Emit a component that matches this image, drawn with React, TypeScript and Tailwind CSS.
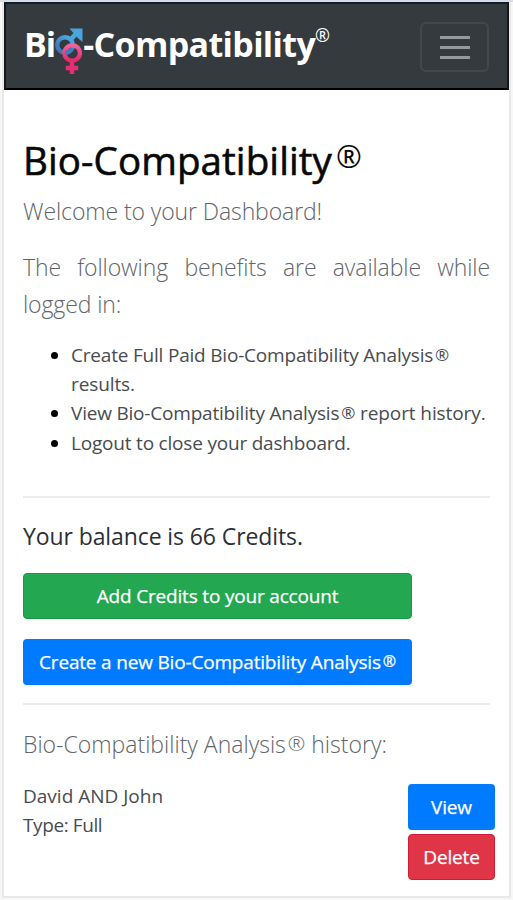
import { clsx } from "clsx";

const BENEFITS = [
  { before: "Create Full Paid Bio-Compatibility Analysis", after: " results." },
  { before: "View Bio-Compatibility Analysis", after: " report history." },
  { before: "Logout to close your dashboard." },
];

function Reg({ className }: { className?: string }) {
  return <span className={clsx("leading-none", className)}>®</span>;
}

function Logo() {
  return (
    <div className="-mt-[1px] flex items-start text-white font-bold text-[34px] leading-[46px]">
      <span className="tracking-[-1px]">Bi</span>
      <svg viewBox="0 0 28 48" className="w-7 h-12 mt-[6px] shrink-0" fill="none">
        <defs>
          <linearGradient id="male" x1="0" y1="1" x2="1" y2="0">
            <stop offset="0" stopColor="#3c6fb5" />
            <stop offset="1" stopColor="#4eb0e6" />
          </linearGradient>
          <linearGradient id="female" x1="0" y1="0" x2="0" y2="1">
            <stop offset="0" stopColor="#f0639b" />
            <stop offset="1" stopColor="#e8256b" />
          </linearGradient>
        </defs>
        <circle cx="10" cy="18" r="7.8" stroke="url(#male)" strokeWidth="4.4" />
        <path d="M15.5 12.5L22 6" stroke="#4aa5de" strokeWidth="4.6" />
        <path d="M14.5 1.5H27.5V15L22.8 11L18 5.5Z" fill="#4aa5de" />
        <circle cx="17.2" cy="26" r="7.8" stroke="url(#female)" strokeWidth="4.4" />
        <path d="M17 34V47M10.8 41H23.2" stroke="#e82d70" strokeWidth="4.4" />
        <path d="M10 25.8A7.8 7.8 0 0 0 17.2 21" stroke="#3f7cc0" strokeWidth="4.4" />
      </svg>
      <span className="tracking-[-0.65px]">-Compatibility</span>
      <Reg className="mt-[5px] text-[18px] font-medium" />
    </div>
  );
}

function Navbar() {
  return (
    <header className="h-[88px] flex items-start justify-between bg-[#343a3e] border-2 border-t-[#0b2033] border-x-[#15171b] border-b-black pl-[18px] pr-[18px] pt-[18px]">
      <Logo />
      <button className="w-[69px] h-[50px] flex flex-col items-center justify-center gap-[7px] rounded-md border-2 border-[#42484c]">
        <span className="w-[30px] h-[3px] bg-[#929a9c]" />
        <span className="w-[30px] h-[3px] bg-[#929a9c]" />
        <span className="w-[30px] h-[3px] bg-[#929a9c]" />
      </button>
    </header>
  );
}

export default function App() {
  return (
    <div className="h-[900px] overflow-hidden bg-[#f7f7f8] border-t-2 border-[#d9dde1] px-0.5 font-['Open_Sans','Noto_Sans',sans-serif]">
      <div className="h-[896px] bg-white border-b-2 border-x-2 border-[#e9e9ea]">
        <Navbar />
        <main className="pl-[19px] pr-[14px] pt-[47px]">
          <h1 className="h-[51px] flex text-[38.5px] leading-[46px] text-[#080808] [-webkit-text-stroke:0.6px_#080808]">
            <span className="tracking-[0.1px]">Bio-Compatibility</span>
            <Reg className="text-[31px] ml-1 mt-1 [-webkit-text-stroke:0]" />
          </h1>
          <p className="h-[61px] text-[23px] leading-[46px] font-light text-[#60656b] tracking-[-0.1px]">
            Welcome to your Dashboard!
          </p>
          <p className="h-[73px] pr-[5px] text-[23px] leading-[36.5px] font-light text-[#60656b] tracking-[-0.1px] text-justify">
            The following benefits are available while logged in:
          </p>
          <ul className="mt-[19px] pl-[48px] list-disc text-[19px] leading-[29.2px] text-[#484c50] marker:text-black tracking-[-0.2px]">
            {BENEFITS.map((b) => (
              <li key={b.before}>
                {b.before}
                {b.after && <Reg className="text-[17px] align-[1px] ml-0.5" />}
                {b.after && <span className="tracking-[-0.1px]">{b.after}</span>}
              </li>
            ))}
          </ul>
          <hr className="mt-[38px] mr-[5px] border-t-2 border-[#ebebeb]" />
          <p className="mt-[20px] text-[23px] leading-[36px] text-[#2c3035] tracking-[-0.1px]">
            Your balance is 66 Credits.
          </p>
          <div className="mt-[19px] w-[389px] flex flex-col gap-5 text-[19px] text-white tracking-[-0.18px] [-webkit-text-stroke:0.25px_white]">
            <button className="h-[46px] rounded bg-[#23a750] border border-[#189a43]">
              Add Credits to your account
            </button>
            <button className="h-[46px] rounded bg-[#007bff]">
              Create a new Bio-Compatibility Analysis
              <Reg className="text-[16px] align-[2px] ml-0.5" />
            </button>
          </div>
          <hr className="mt-[18px] mr-[5px] border-t-2 border-[#ebebeb]" />
          <p className="mt-[21px] text-[23px] leading-[36px] font-light text-[#60656b]">
            Bio-Compatibility Analysis
            <Reg className="text-[21px] align-[2px] ml-0.5" /> history:
          </p>
          <div className="mt-[22px] flex justify-between">
            <div className="-mt-[2px] text-[19px] leading-[29.2px] text-[#484c50]">
              <p>David AND John</p>
              <p className="tracking-[-0.4px]">Type: Full</p>
            </div>
            <div className="w-[87px] flex flex-col gap-1 text-[19px] text-white tracking-[-0.15px] [-webkit-text-stroke:0.25px_white]">
              <button className="h-[46px] rounded bg-[#007bff]">View</button>
              <button className="h-[46px] rounded bg-[#df3547] border border-[#d01b32]">
                Delete
              </button>
            </div>
          </div>
        </main>
      </div>
    </div>
  );
}
